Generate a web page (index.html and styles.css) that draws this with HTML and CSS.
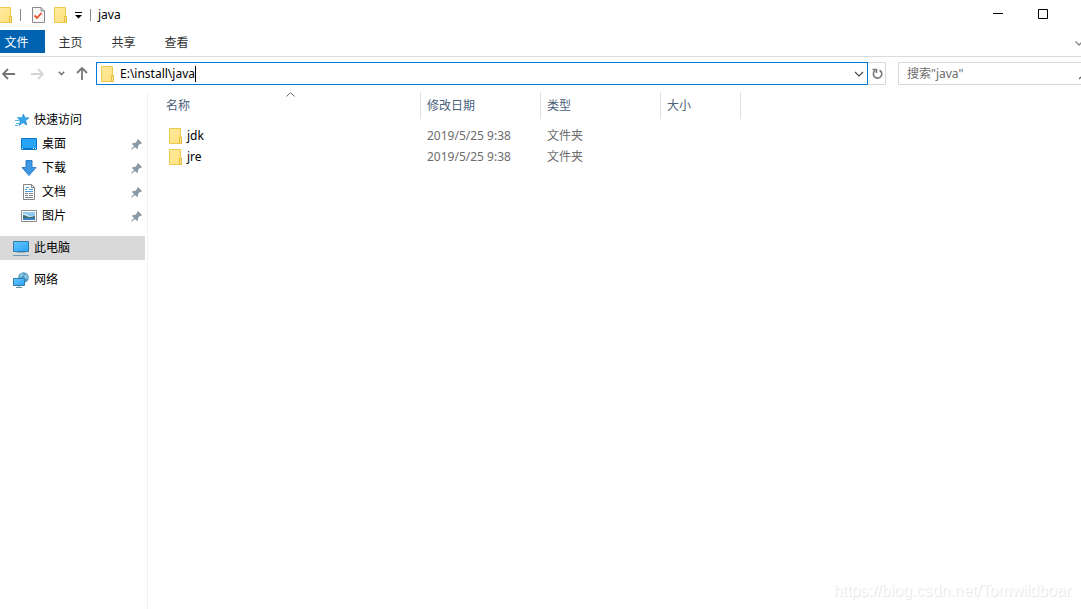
FILE: index.html
```html
<!DOCTYPE html>
<html lang="zh-CN">
<head>
    <meta charset="UTF-8">
    <meta name="viewport" content="width=device-width, initial-scale=1.0">
    <title>java</title>
    <link rel="stylesheet" href="styles.css">
</head>
<body>
    <!-- shared icons -->
    <svg class="defs" width="0" height="0">
        <defs>
            <linearGradient id="gold" x1="0" y1="0" x2="1" y2="1">
                <stop offset="0" stop-color="#ffeaa0"/>
                <stop offset="1" stop-color="#ffe07a"/>
            </linearGradient>
            <linearGradient id="blue" x1="0" y1="0" x2="1" y2="1">
                <stop offset="0" stop-color="#66c7ff"/>
                <stop offset="1" stop-color="#2aa3f5"/>
            </linearGradient>
        </defs>
        <symbol id="folder" viewBox="0 0 13 16">
            <path d="M.5.5h11v8.5h1v6.5H.5z" fill="url(#gold)" stroke="#ecc94f"/>
            <path d="M10.5 15.5V9.500h2v6z" fill="#ffe68c" stroke="#e6bd3c"/>
        </symbol>
        <symbol id="pin" viewBox="0 0 11 11">
            <path d="M7 0 11 4 10 5 9 4.800 7 7v2L6 10 4 8 .8 10.800.2 10.200 3 7 1 5 2 4h2L6.200 2 6 1z" fill="#8c98a3"/>
        </symbol>
    </svg>

    <div class="explorer">
        <header class="titlebar">
            <svg class="folder first-folder"><use href="#folder"/></svg>
            <span class="divider"></span>
            <svg class="properties" width="13" height="16" viewBox="0 0 13 16">
                <path d="M.5.5h8.500l3.500 3.500v11.500H.5z" fill="#f7f7f7" stroke="#8a8a8a"/>
                <path d="M9 .5V4h3.500" fill="none" stroke="#8a8a8a"/>
                <path d="m2.500 8.500 2.500 2.500 4.500-5" fill="none" stroke="#e8502a" stroke-width="1.800"/>
            </svg>
            <svg class="folder"><use href="#folder"/></svg>
            <button class="icon-button customize" aria-label="自定义快速访问工具栏">
                <svg width="7" height="7" viewBox="0 0 7 7"><path d="M0 0h7v1H0zM0 3h7L3.500 6.500z"/></svg>
            </button>
            <span class="divider"></span>
            <h1>java</h1>
            <div class="window-buttons">
                <button class="icon-button" aria-label="最小化">
                    <svg width="10" height="10" viewBox="0 0 10 10"><path d="M0 4h10v1H0z"/></svg>
                </button>
                <button class="icon-button" aria-label="最大化">
                    <svg width="10" height="10" viewBox="0 0 10 10"><path d="M.5.5h9v9h-9z" fill="none" stroke="#000"/></svg>
                </button>
            </div>
        </header>

        <nav class="ribbon">
            <button class="tab file-tab">文件</button>
            <button class="tab">主页</button>
            <button class="tab">共享</button>
            <button class="tab">查看</button>
            <button class="icon-button expand" aria-label="展开功能区">
                <svg width="8" height="5" viewBox="0 0 8 5"><path d="m.5.5 3.500 3.500L7.500.5" fill="none" stroke="#8a8a8a" stroke-width="1.300"/></svg>
            </button>
        </nav>

        <div class="toolbar">
            <div class="history">
                <button class="icon-button" aria-label="后退">
                    <svg width="13" height="12" viewBox="0 0 13 12"><path d="M6 1 1 6l5 5M1 6h12" fill="none" stroke="#777" stroke-width="1.800"/></svg>
                </button>
                <button class="icon-button forward" aria-label="前进">
                    <svg width="13" height="12" viewBox="0 0 13 12"><path d="m7 1 5 5-5 5M12 6H0" fill="none" stroke="#d5d5d5" stroke-width="1.800"/></svg>
                </button>
                <button class="icon-button recent" aria-label="最近浏览的位置">
                    <svg width="7" height="5" viewBox="0 0 7 5"><path d="m.8.8 2.700 2.700L6.200.8" fill="none" stroke="#777" stroke-width="1.600"/></svg>
                </button>
                <button class="icon-button up" aria-label="上移">
                    <svg width="12" height="13" viewBox="0 0 12 13"><path d="m1 6 5-5 5 5M6 1v12" fill="none" stroke="#777" stroke-width="1.800"/></svg>
                </button>
            </div>
            <div class="address">
                <svg class="folder"><use href="#folder"/></svg>
                <div class="path">
                    <input type="text" value="E:\install\java" aria-label="地址">
                    <span class="caret"></span>
                </div>
                <button class="icon-button" aria-label="以前的位置">
                    <svg width="10" height="6" viewBox="0 0 10 6"><path d="m1 1 4 4 4-4" fill="none" stroke="#444" stroke-width="1.100"/></svg>
                </button>
            </div>
            <button class="icon-button refresh" aria-label="刷新">
                <svg width="11" height="12" viewBox="0 0 11 12"><path d="M7.500 2.200A4.200 4.200 0 1 1 3 2.600M.5 1.500h4V5" fill="none" stroke="#777" stroke-width="1.600"/></svg>
            </button>
            <div class="search">
                <input type="text" placeholder='搜索"java"' aria-label="搜索">
                <svg width="2" height="5" viewBox="0 0 2 5"><path d="M0 4 2 2" stroke="#666" stroke-width="1.500"/></svg>
            </div>
        </div>

        <main class="content">
            <nav class="sidebar">
                <a class="item" href="#">
                    <svg width="14" height="14" viewBox="0 0 14 14">
                        <path d="m8.500 1 1.300 3.800 4 .1-3.200 2.600 1 4.500-3.600-2.500L4 12.500l1.500-4.700L3 5.200l4-.3z" fill="#35a5ee" stroke="#1784cf" stroke-width=".7"/>
                        <path d="M2 4.500h4M0 7.500h5M1 10.500h4M0 12.500h3" stroke="#58b7ef"/>
                    </svg>
                    <span>快速访问</span>
                </a>
                <a class="item child" href="#">
                    <svg width="16" height="12" viewBox="0 0 16 12">
                        <path d="M.5.5h15v11H.5z" fill="#27a3f8" stroke="#0b76c6"/>
                        <path d="M1 10.500h14" stroke="#0872c4"/>
                        <path d="M1 10.500h1M12 10.500h1M14 10.500h1" stroke="#fff"/>
                    </svg>
                    <span>桌面</span>
                    <svg class="pin"><use href="#pin"/></svg>
                </a>
                <a class="item child" href="#">
                    <svg width="16" height="16" viewBox="0 0 16 16"><path d="M5 .5h6v7h4L8 15.500 1 7.500h4z" fill="#3d97e3" stroke="#2f7fcb"/></svg>
                    <span>下载</span>
                    <svg class="pin"><use href="#pin"/></svg>
                </a>
                <a class="item child" href="#">
                    <svg width="16" height="16" viewBox="0 0 16 16">
                        <path d="M2.500.5h8l3 3v12h-11z" fill="#fff" stroke="#848484"/>
                        <path d="M10.500.5v3h3" fill="none" stroke="#848484"/>
                        <path d="M5 3.500h3M4 5.500h2M8 5.500h4M4 7.500h8" stroke="#4b9fd8"/>
                        <path d="M4 9.500h3M8 9.500h4M4 11.500h3M8 11.500h4M4 13.500h8" stroke="#77838c"/>
                    </svg>
                    <span>文档</span>
                    <svg class="pin"><use href="#pin"/></svg>
                </a>
                <a class="item child" href="#">
                    <svg width="16" height="12" viewBox="0 0 16 12">
                        <path d="M.5.5h15v11H.5z" fill="#fff" stroke="#8c8c8c"/>
                        <path d="M2 2h12v8H2z" fill="#8ecbf2"/>
                        <path d="M2 4h3l3 2h6v2H2z" fill="#dceff8"/>
                        <path d="M2 5c3 0 4 2 7 2 2 0 3-1 5-1v2H2z" fill="#3d6f6c"/>
                        <path d="M2 8h12v2H2z" fill="#3a80c4"/>
                    </svg>
                    <span>图片</span>
                    <svg class="pin"><use href="#pin"/></svg>
                </a>
                <a class="item root selected" href="#">
                    <svg width="16" height="16" viewBox="0 0 16 16">
                        <path d="M.5 1.500h15v10H.5z" fill="url(#blue)" stroke="#327ca9"/>
                        <path d="M4 12.500h8" stroke="#8fafc3"/>
                        <path d="M0 15.500h16" stroke="#7899b5"/>
                    </svg>
                    <span>此电脑</span>
                </a>
                <a class="item root" href="#">
                    <svg width="16" height="16" viewBox="0 0 16 16">
                        <circle cx="10.500" cy="5.500" r="5.300" fill="#4e9ac6"/>
                        <path d="M6.500 3 9 1l2 1-2 3-2 1zM12 2l2 1 1 3-2 1-2-2z" fill="#8cc4de"/>
                        <path d="M.5 6.500h11v7H.5z" fill="url(#blue)" stroke="#327ca9"/>
                        <path d="M6 14v1.500M3 15.500h6" stroke="#6291ae"/>
                    </svg>
                    <span>网络</span>
                </a>
            </nav>

            <section class="files">
                <table>
                    <colgroup>
                        <col class="col-name">
                        <col class="col-date">
                        <col class="col-type">
                        <col class="col-size">
                    </colgroup>
                    <thead>
                        <tr>
                            <th>名称
                                <svg class="sort" width="9" height="5" viewBox="0 0 9 5"><path d="m.5 4.500 4-4 4 4" fill="none" stroke="#666"/></svg>
                            </th>
                            <th>修改日期</th>
                            <th>类型</th>
                            <th>大小</th>
                        </tr>
                    </thead>
                    <tbody>
                        <tr>
                            <td><div class="name"><svg class="folder"><use href="#folder"/></svg>jdk</div></td>
                            <td>2019/5/25 9:38</td>
                            <td>文件夹</td>
                            <td></td>
                        </tr>
                        <tr>
                            <td><div class="name"><svg class="folder"><use href="#folder"/></svg>jre</div></td>
                            <td>2019/5/25 9:38</td>
                            <td>文件夹</td>
                            <td></td>
                        </tr>
                    </tbody>
                </table>
            </section>
        </main>
        <div class="watermark">https://blog.csdn.net/Tomwildboar</div>
    </div>
</body>
</html>
```

FILE: styles.css
```css
* {
    box-sizing: border-box;
}
body {
    margin: 0;
    background: #fff;
    color: #000;
    font-family: "Noto Sans", "Noto Sans CJK SC", sans-serif;
    font-size: 12px;
    line-height: 20px;
}
svg {
    display: block;
    flex-shrink: 0;
}
.defs {
    position: absolute;
}
button, input {
    font: inherit;
    color: inherit;
    border: none;
    background: none;
    padding: 0;
    margin: 0;
}
.icon-button {
    display: flex;
    align-items: center;
    justify-content: center;
    flex-shrink: 0;
}
.folder {
    width: 13px;
    height: 16px;
}
.explorer {
    position: relative;
    display: flex;
    flex-direction: column;
    min-height: 100vh;
    overflow: hidden;
}

/* title bar */
.titlebar {
    display: flex;
    align-items: center;
    height: 30px;
}
.first-folder {
    margin-left: -1px;
}
.divider {
    width: 1px;
    height: 12px;
    margin: 0 7px;
    background: #888;
}
.first-folder + .divider {
    margin-left: 8px;
}
.properties {
    margin: 0 9px 0 4px;
}
.customize {
    margin-left: 8px;
    margin-right: 1px;
}
.titlebar h1 {
    margin: 0;
    font-size: 12px;
    font-weight: normal;
}
.window-buttons {
    display: flex;
    gap: 35px;
    margin-left: auto;
    padding-right: 33px;
    padding-bottom: 2px;
}

/* ribbon */
.ribbon {
    display: flex;
    align-items: flex-start;
    height: 27px;
    border-bottom: 1px solid #dadbdc;
}
.tab {
    height: 23px;
    width: 53px;
    padding-top: 2px;
    padding-right: 2px;
    color: #333;
}
.file-tab {
    width: 45px;
    padding-right: 12px;
    background: #0063b1;
    color: #fff;
}
.expand {
    align-self: center;
    margin-left: auto;
    margin-right: -2px;
}

/* navigation and address */
.toolbar {
    display: flex;
    align-items: center;
    padding-top: 5px;
}
.history {
    display: flex;
    align-items: center;
    width: 96px;
    padding-left: 2px;
    flex-shrink: 0;
}
.forward {
    margin-left: 16px;
}
.recent {
    margin-left: 14px;
}
.up {
    margin-left: 11px;
}
.address {
    display: flex;
    align-items: center;
    flex: 1;
    height: 23px;
    padding: 0 3px 0 4px;
    border: 1px solid #0078d7;
}
.path {
    display: flex;
    align-items: center;
    flex: 1;
    padding-left: 6px;
}
.path input {
    field-sizing: content;
}
.caret {
    width: 1px;
    height: 16px;
    background: #000;
}
.refresh {
    width: 18px;
    height: 23px;
    padding-left: 2px;
    border: 1px solid #d9d9d9;
    border-left: none;
}
.search {
    display: flex;
    align-items: flex-end;
    width: 183px;
    height: 23px;
    margin-left: 12px;
    padding-left: 8px;
    border: 1px solid #d9d9d9;
    border-right: none;
}
.search input {
    flex: 1;
    min-width: 0;
    height: 21px;
}
.search svg {
    margin-bottom: 4px;
}
.search input::placeholder {
    color: #6d6d6d;
}

/* main area */
.content {
    display: flex;
    flex: 1;
    padding-top: 7px;
}
.sidebar {
    width: 148px;
    padding: 16px 2px 0 0;
    border-right: 1px solid #f0f0f0;
    flex-shrink: 0;
}
.item {
    display: flex;
    align-items: center;
    gap: 5px;
    height: 24px;
    padding-left: 15px;
    color: #000;
    text-decoration: none;
}
.child {
    padding-left: 21px;
}
.root {
    margin-top: 8px;
    padding-left: 13px;
}
.selected {
    background: #d9d9d9;
}
.pin {
    width: 11px;
    height: 11px;
    margin-left: auto;
    margin-right: 3px;
}

/* file list */
.files {
    flex: 1;
}
table {
    table-layout: fixed;
    width: 593px;
    border-collapse: separate;
    border-spacing: 0;
}
.col-name {
    width: 273px;
}
.col-date, .col-type {
    width: 120px;
}
.col-size {
    width: 80px;
}
th {
    position: relative;
    height: 27px;
    padding: 0 6px;
    border-right: 1px solid #e2e2e2;
    color: #4c607a;
    font-weight: normal;
    text-align: left;
}
th:first-child {
    padding-left: 18px;
}
.sort {
    position: absolute;
    top: 0;
    left: calc(50% + 2px);
}
td {
    height: 21px;
    padding: 0 6px;
    color: #6d6d6d;
}
td:first-child {
    padding-left: 21px;
}
thead::after {
    content: "";
    display: block;
    height: 6px;
}
.name {
    display: flex;
    align-items: center;
    gap: 5px;
    color: #000;
}

.watermark {
    position: absolute;
    right: 10px;
    bottom: 8px;
    font-family: "Liberation Sans", sans-serif;
    font-size: 16px;
    color: #fff;
    text-shadow: 1px 1px 1px #e2e2e2;
}
```
